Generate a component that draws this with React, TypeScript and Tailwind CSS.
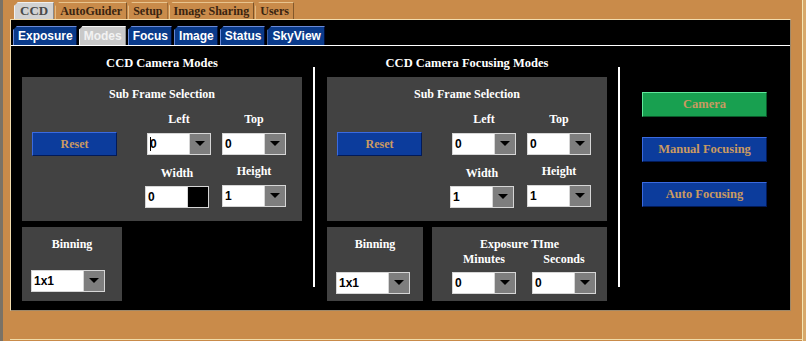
import { ReactNode } from 'react';

const topTabs = ['CCD', 'AutoGuider', 'Setup', 'Image Sharing', 'Users'];
const subTabs = ['Exposure', 'Modes', 'Focus', 'Image', 'Status', 'SkyView'];

function Arrow() {
    return (
        <svg width="10" height="6" viewBox="0 0 10 6">
            <polygon points="0,0 10,0 5,5" fill="#000" />
        </svg>
    );
}

function Combo({
    value,
    width = 'w-[64px]',
    caret = false,
    black = false,
}: {
    value: string;
    width?: string;
    caret?: boolean;
    black?: boolean;
}) {
    return (
        <div className={`${width} flex h-[22px] border border-[#d6d6d6] bg-white`}>
            <div className="flex flex-1 items-center border-r border-[#d6d6d6] pl-[2px] font-['Liberation_Sans',sans-serif] text-[12px] font-bold text-black">
                {caret && <span className="mr-[-1px] h-[14px] w-[1px] bg-black" />}
                {value}
            </div>
            <div
                className={`flex w-[20px] items-center justify-center ${black ? 'bg-black' : 'bg-[#7e7e7e]'}`}
            >
                {!black && <Arrow />}
            </div>
        </div>
    );
}

function Label({ children }: { children: ReactNode }) {
    return (
        <div className="h-[14px] text-center text-[12px] leading-[14px] font-bold text-white">
            {children}
        </div>
    );
}

function BigButton({ label, green = false }: { label: string; green?: boolean }) {
    return (
        <div
            className={`flex h-[25px] w-[125px] items-center justify-center border text-[12.5px] font-bold text-[#c99a62] ${
                green
                    ? 'border-t-[#5fe89a] border-r-[#0a5a2a] border-b-[#0a5a2a] border-l-[#5fe89a] bg-[#18a050]'
                    : 'border-t-[#3a6ae0] border-r-[#021a58] border-b-[#021a58] border-l-[#3a6ae0] bg-[#0c3c9c]'
            }`}
        >
            {label}
        </div>
    );
}

function ResetButton() {
    return (
        <div className="mt-[20px] ml-[10px] flex h-[24px] w-[85px] items-center justify-center border border-t-[#3a6ae0] border-r-[#021a58] border-b-[#021a58] border-l-[#3a6ae0] bg-[#0c3c9c] text-[12px] font-bold text-[#c99a62]">
            Reset
        </div>
    );
}

function SubFrame({ focusing }: { focusing: boolean }) {
    return (
        <div className="flex h-[144px] w-[280px] flex-col bg-[#424242] pt-[10px]">
            <Label>Sub Frame Selection</Label>
            <div className="mt-[11px] flex items-start">
                <ResetButton />
                <div className="ml-[28px] flex w-[66px] flex-col">
                    <div className="ml-[2px] w-[64px]">
                        <Label>Left</Label>
                    </div>
                    <div className="mt-[7px] ml-[2px]">
                        <Combo value="0" caret={!focusing} />
                    </div>
                    <div className="mt-[11px] w-[64px]">
                        <Label>Width</Label>
                    </div>
                    <div className="mt-[6px]">
                        {focusing ? <Combo value="1" /> : <Combo value="0" black />}
                    </div>
                </div>
                <div className="ml-[11px] flex w-[64px] flex-col">
                    <Label>Top</Label>
                    <div className="mt-[7px]">
                        <Combo value="0" />
                    </div>
                    <div className="mt-[9px]">
                        <Label>Height</Label>
                    </div>
                    <div className="mt-[7px]">
                        <Combo value="1" />
                    </div>
                </div>
            </div>
        </div>
    );
}

function Binning({ w, comboTop }: { w: string; comboTop: string }) {
    return (
        <div className={`${w} flex h-[74px] flex-col bg-[#424242] pt-[10px]`}>
            <Label>Binning</Label>
            <div className={`${comboTop} ml-[9px]`}>
                <Combo value="1x1" width="w-[74px]" />
            </div>
        </div>
    );
}

function Divider() {
    return <div className="mt-[21px] h-[220px] w-[2px] bg-white" />;
}

export default function App() {
    return (
        <div className="flex h-[341px] w-[806px] overflow-hidden bg-[#c98b4a] font-['Liberation_Serif',serif]">
            <div className="w-[3px] bg-[#7a7266]" />
            <div className="flex w-[799px] flex-col pt-[2px] pl-[7px]">
                {/* top tabs */}
                <div className="ml-[4px] flex h-[17px] items-end gap-[1px]">
                    {topTabs.map((t) => (
                        <div
                            key={t}
                            className={`flex h-[17px] items-center border-t border-r border-l text-[12px] font-bold [clip-path:polygon(4px_0,100%_0,100%_100%,0_100%,0_4px)] ${
                                t === 'CCD'
                                    ? 'border-t-[#f0f0f0] border-r-[#8a8a8a] border-l-[#f0f0f0] bg-[#d2d2d2] px-[5px] text-[13px] text-[#4a4a4a]'
                                    : 'border-t-[#e8c48e] border-r-[#7a5228] border-l-[#e8c48e] px-[4px] text-[#3a2410]'
                            }`}
                        >
                            {t}
                        </div>
                    ))}
                </div>

                {/* black panel */}
                <div className="flex h-[292px] w-[781px] flex-col border border-t-[#f2dcae] border-r-[#a08868] border-b-[#a08868] border-l-[#f2dcae] bg-black">
                    <div className="mt-[6px] ml-[2px] flex h-[19px] gap-[2px]">
                        {subTabs.map((t) => (
                            <div
                                key={t}
                                className={`flex h-[19px] items-center border-t border-r border-l pr-[3px] pl-[4px] font-['Liberation_Sans',sans-serif] text-[12px] font-bold [clip-path:polygon(4px_0,100%_0,100%_100%,0_100%,0_4px)] ${
                                    t === 'Modes'
                                        ? 'border-t-[#f4f4f4] border-r-[#909090] border-l-[#f4f4f4] bg-[#c9c9c9] text-[#f2f2f2]'
                                        : 'border-t-[#6a8ad8] border-r-[#000a30] border-l-[#6a8ad8] bg-[#0a3a8a] text-white'
                                }`}
                            >
                                {t}
                            </div>
                        ))}
                    </div>
                    <div className="h-[1px] bg-white" />

                    <div className="flex items-start pl-[11px]">
                        {/* left section */}
                        <div className="flex w-[280px] flex-col">
                            <div className="mt-[9px] h-[16px] text-center text-[12.5px] leading-[16px] font-bold text-white">
                                CCD Camera Modes
                            </div>
                            <div className="mt-[6px]">
                                <SubFrame focusing={false} />
                            </div>
                            <div className="mt-[6px] flex">
                                <Binning w="w-[100px]" comboTop="mt-[19px]" />
                            </div>
                        </div>

                        <div className="ml-[11px]">
                            <Divider />
                        </div>

                        {/* right section */}
                        <div className="ml-[12px] flex w-[280px] flex-col">
                            <div className="mt-[9px] h-[16px] text-center text-[12.5px] leading-[16px] font-bold text-white">
                                CCD Camera Focusing Modes
                            </div>
                            <div className="mt-[6px]">
                                <SubFrame focusing />
                            </div>
                            <div className="mt-[6px] flex gap-[9px]">
                                <Binning w="w-[96px]" comboTop="mt-[21px]" />
                                <div className="flex h-[74px] w-[175px] flex-col bg-[#424242] pt-[10px]">
                                    <Label>Exposure TIme</Label>
                                    <div className="mt-[1px] ml-[20px] flex gap-[16px]">
                                        <div className="flex w-[64px] flex-col">
                                            <Label>Minutes</Label>
                                            <div className="mt-[6px]">
                                                <Combo value="0" />
                                            </div>
                                        </div>
                                        <div className="flex w-[64px] flex-col">
                                            <Label>Seconds</Label>
                                            <div className="mt-[6px]">
                                                <Combo value="0" />
                                            </div>
                                        </div>
                                    </div>
                                </div>
                            </div>
                        </div>

                        <div className="ml-[11px]">
                            <Divider />
                        </div>

                        {/* mode buttons */}
                        <div className="mt-[46px] ml-[22px] flex flex-col gap-[20px]">
                            <BigButton label="Camera" green />
                            <BigButton label="Manual Focusing" />
                            <BigButton label="Auto Focusing" />
                        </div>
                    </div>
                </div>

                <div className="mt-[28px] h-[1px] bg-[#f0dca8]" />
            </div>
            <div className="w-[1px] bg-[#f4e6b4]" />
            <div className="w-[3px] bg-[#d8a86a]" />
        </div>
    );
}
